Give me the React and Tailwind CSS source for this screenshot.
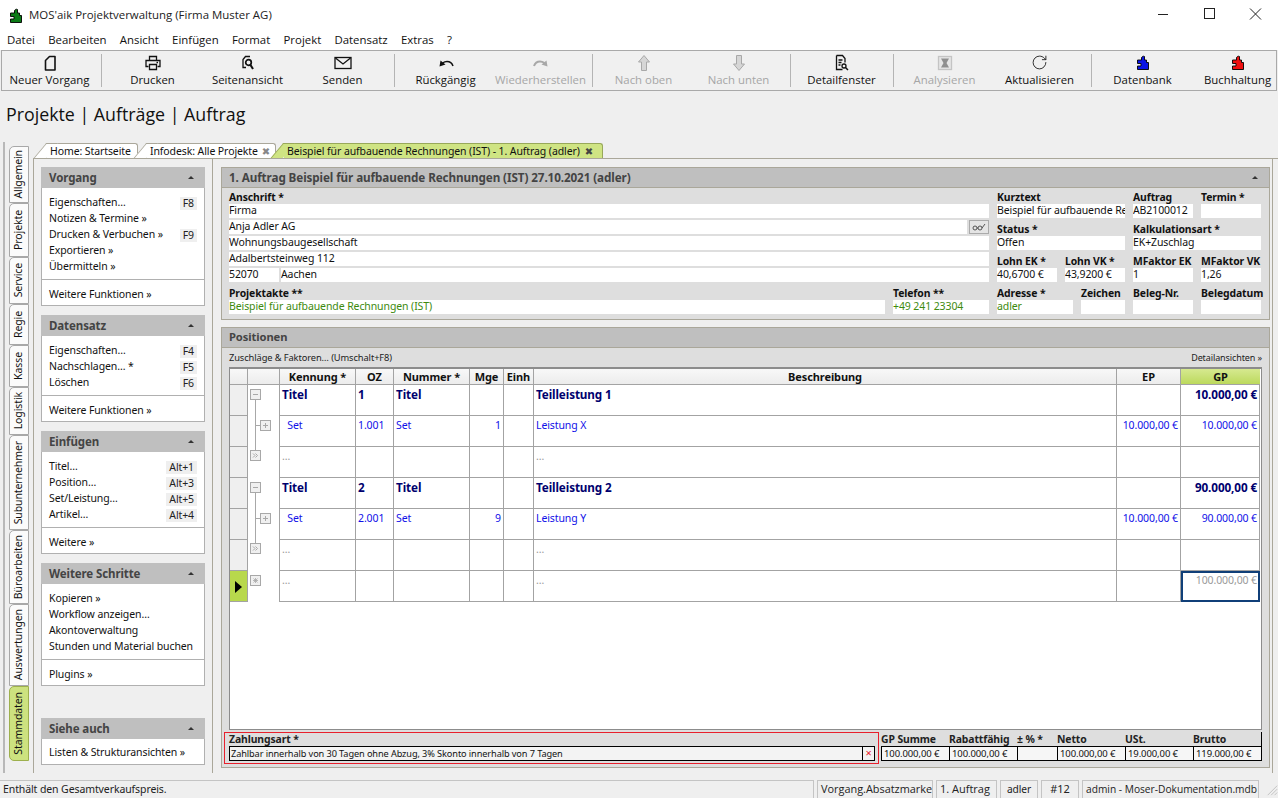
import { RotateCw } from 'lucide-react';

const tahoma = 'font-["Noto_Sans","DejaVu_Sans",sans-serif]';
const segoe = "font-['Open_Sans',sans-serif]";

// Puzzle-Figur (Logo und Datenbank / Buchhaltung)
function PuzzleIcon({ color }) {
  return (
    <svg width="12" height="15" viewBox="0 0 12 15">
      <path d="M4.5 5V3a2 2 0 0 1 3 -1.5V5h2v2.5h2v7H.5V11H4V8.500H.5V5z" fill={color} stroke="#000" strokeWidth="0.9" />
    </svg>
  );
}

function ToolIcon({ name, off }) {
  const c = off ? '#a8a8a8' : '#111';
  const common = { width: 18, height: 18, viewBox: '0 0 18 18', fill: 'none', stroke: c, strokeWidth: 1.3 };
  switch (name) {
    case 'neu':
      return <svg {...common} strokeWidth="1.6"><path d="M8.5 2.5H14V16H4.5V6.5z" strokeLinejoin="round" /></svg>;
    case 'druck':
      return <svg {...common}><path d="M5.5 6V2.5h7V6M4.5 12.5H2v-6h14v6h-2.500" /><path d="M5.5 10.5h7v5h-7z" /><path d="M12.5 8.5H14" /></svg>;
    case 'seite':
      return <svg {...common}><path d="M11 2.5H6.5L4 5.5v8h3" /><circle cx="9.5" cy="8.5" r="2.8" strokeWidth="1.7" /><path d="M11.5 11l2.5 4" strokeWidth="2" /></svg>;
    case 'mail':
      return <svg {...common}><rect x="1" y="3.5" width="16" height="11" /><path d="M1.5 4L9 10l7.500-6" /></svg>;
    case 'undo':
      return <svg {...common}><path d="M16 12c-1-3-3.500-4.500-6-4.500-1.500 0-3 .5-4.500 1.500" strokeWidth="1.5" /><path d="M2.5 12.5l1-6 5 4z" fill={c} stroke="none" /></svg>;
    case 'redo':
      return <svg {...common}><path d="M2 12c1-3 3.500-4.500 6-4.500 1.500 0 3 .5 4.500 1.500" strokeWidth="2" /><path d="M15.5 12.5l-1-6-5 4z" fill={c} stroke="none" /></svg>;
    case 'hoch':
      return <svg {...common} strokeWidth="1"><path d="M9 1.5L14.5 8h-3v8.500h-5V8h-3z" fill="#d6d6d6" /></svg>;
    case 'runter':
      return <svg {...common} strokeWidth="1"><path d="M9 16.5l5.500-6.500h-3V1.500h-5V10h-3z" fill="#d6d6d6" /></svg>;
    case 'detail':
      return <svg {...common}><path d="M3.5 1.5h6l2.500 3v4M3.5 1.5v14h6" /><path d="M5.5 6h4M5.5 8.5h3M5.5 11h2" /><circle cx="11" cy="12" r="2" /><path d="M12.5 13.5L15 16" strokeWidth="1.5" /></svg>;
    case 'analyse':
      return <svg {...common}><rect x="2.5" y="2.5" width="13" height="13" fill="#e6e6e6" stroke="#c4c4c4" /><path d="M5 4.5h8L10.500 9l2.500 4.500H5L7.500 9z" fill="#8f8f8f" stroke="none" /></svg>;
    case 'reload':
      return <RotateCw size={17} color="#222" strokeWidth={1.3} />;
    case 'db':
      return <PuzzleIcon color="#0a14e6" />;
    default:
      return <PuzzleIcon color="#f01010" />;
  }
}

const toolbar = [
  { t: 'Neuer Vorgang', i: 'neu' }, '|',
  { t: 'Drucken', i: 'druck' }, { t: 'Seitenansicht', i: 'seite' }, { t: 'Senden', i: 'mail' }, '|',
  { t: 'Rückgängig', i: 'undo' }, { t: 'Wiederherstellen', i: 'redo', off: true }, '|',
  { t: 'Nach oben', i: 'hoch', off: true }, { t: 'Nach unten', i: 'runter', off: true }, '|',
  { t: 'Detailfenster', i: 'detail' }, '|',
  { t: 'Analysieren', i: 'analyse', off: true }, { t: 'Aktualisieren', i: 'reload' }, '|',
  { t: 'Datenbank', i: 'db' }, { t: 'Buchhaltung', i: 'buch' },
];

const sideTabs = [
  ['Allgemein', 57], ['Projekte', 54], ['Service', 47], ['Regie', 41], ['Kasse', 42], ['Logistik', 48],
  ['Subunternehmer', 95], ['Büroarbeiten', 74], ['Auswertungen', 82],
];

const panels = [
  {
    title: 'Vorgang', h: 'h-[118px]',
    items: [['Eigenschaften…', 'F8'], ['Notizen & Termine »'], ['Drucken & Verbuchen »', 'F9'], ['Exportieren »'], ['Übermitteln »']],
    more: 'Weitere Funktionen »',
  },
  {
    title: 'Datensatz', h: 'h-[86px]',
    items: [['Eigenschaften…', 'F4'], ['Nachschlagen… *', 'F5'], ['Löschen', 'F6']],
    more: 'Weitere Funktionen »',
  },
  {
    title: 'Einfügen', h: 'h-[102px]',
    items: [['Titel…', 'Alt+1'], ['Position…', 'Alt+3'], ['Set/Leistung…', 'Alt+5'], ['Artikel…', 'Alt+4']],
    more: 'Weitere »',
  },
  {
    title: 'Weitere Schritte', h: 'h-[102px]',
    items: [['Kopieren »'], ['Workflow anzeigen…'], ['Akontoverwaltung'], ['Stunden und Material buchen']],
    more: 'Plugins »',
  },
];

function Caret() {
  return <span className="w-0 h-0 border-x-[3px] border-x-transparent border-b-[3px] border-b-[#333]" />;
}

function SidePanel({ title, h, items, more }) {
  return (
    <section className="w-[164px] mb-[9px]">
      <div className="h-[21px] bg-[#bfbfbf] flex items-center justify-between pl-[8px] pr-[11px]">
        <span className="font-bold text-[11.5px] text-[#444]">{title}</span>
        <Caret />
      </div>
      <div className={`${h} bg-white border-x border-b border-[#b0b0b0] flex flex-col`}>
        <div className="flex-1 pt-[7px] px-[7px]">
          {items.map(([label, key]) => (
            <div key={label} className="h-[16px] flex items-center justify-between text-[10.5px] text-[#111] whitespace-nowrap">
              <span>{label}</span>
              {key && <span className="bg-[#efefef] px-[3px] h-[13px] leading-[13px] text-[#222]">{key}</span>}
            </div>
          ))}
        </div>
        <div className="h-[26px] border-t border-[#b0b0b0] px-[7px] pt-[4px] flex items-center text-[10.5px] text-[#111]">{more}</div>
      </div>
    </section>
  );
}

function Label({ children, className = '' }) {
  return <div className={`h-[16px] pt-[2px] leading-[14px] font-bold text-[10.4px] text-[#111] whitespace-nowrap ${className}`}>{children}</div>;
}

function Field({ children, className = '', color = 'text-[#111]' }) {
  return <div className={`h-[14px] bg-white leading-[13px] text-[10.5px] overflow-hidden whitespace-nowrap ${color} ${className}`}>{children}</div>;
}

function LField({ label, value, className = '', color, fieldClass }) {
  return (
    <div className={className}>
      <Label>{label}</Label>
      <Field color={color} className={fieldClass}>{value}</Field>
    </div>
  );
}

// Baumspalte: Kästchen und Linien pro Zeile
function TreeCell({ kind }) {
  return (
    <div className="bg-white border-r border-[#a3a3a3]">
      <svg width="31" height="31" viewBox="0 0 31 31" fill="none">
        {kind === 'minus' && (
          <g stroke="#a8a8a8">
            <path d="M7.5 14v17" />
            <rect x="2.5" y="4.5" width="10" height="10" fill="#f0f0f0" />
            <path d="M5 9.5h5" />
          </g>
        )}
        {kind === 'plus' && (
          <g stroke="#a8a8a8">
            <path d="M7.5 0v31M7.5 9.5h5" />
            <rect x="12.5" y="4.5" width="10" height="10" fill="#f0f0f0" />
            <path d="M15 9.5h5M17.5 7v5" />
          </g>
        )}
        {kind === 'more' && (
          <g stroke="#a8a8a8">
            <path d="M7.5 0v3" />
            <rect x="2.5" y="3.5" width="10" height="10" fill="#f0f0f0" />
            <path d="M5 6.5l2 2-2 2M7.5 6.5l2 2-2 2" />
          </g>
        )}
        {kind === 'new' && (
          <g stroke="#a8a8a8">
            <rect x="2.5" y="4.5" width="10" height="10" fill="#f0f0f0" />
            <path d="M5 9.5h5M7.5 7v5M5.5 7.5l4 4M9.5 7.5l-4 4" strokeWidth="0.8" />
          </g>
        )}
      </svg>
    </div>
  );
}

const cell = 'border-r border-b border-[#a3a3a3] bg-white pt-[2px] px-[2px] text-[10.5px] leading-[14px] whitespace-nowrap overflow-hidden';
const bold = 'font-bold text-[#00006e] !text-[11.7px]';
const blue = 'text-[#1010e8]';
const dots = 'text-[#9a9a9a]';

function Row({ tree, marker, values, style, selected }) {
  const [kennung, oz, nummer, mge, text, ep, gp] = values;
  return (
    <>
      <div className={`border-r border-b border-[#a3a3a3] flex items-center justify-center ${marker ? 'bg-[#b8d84c]' : 'bg-[#efefef]'}`}>
        {marker && <span className="w-0 h-0 mt-[1px] border-y-[6px] border-y-transparent border-l-[7px] border-l-black" />}
      </div>
      <TreeCell kind={tree} />
      <div className={`${cell} ${style}`}>{kennung}</div>
      <div className={`${cell} ${style}`}>{oz}</div>
      <div className={`${cell} ${style}`}>{nummer}</div>
      <div className={`${cell} ${style} text-right`}>{mge}</div>
      <div className={`${cell} ${style}`} />
      <div className={`${cell} ${style}`}>{text}</div>
      <div className={`${cell} ${style} text-right`}>{ep}</div>
      {selected ? (
        <div className="border-2 border-[#103f78] bg-white text-right text-[10.5px] leading-[14px] text-[#9a9a9a] pr-[1px] whitespace-nowrap overflow-hidden">{gp}</div>
      ) : (
        <div className={`${cell} ${style} text-right`}>{gp}</div>
      )}
    </>
  );
}

const headCell = 'border-r border-b border-[#a3a3a3] bg-gradient-to-b from-[#f8f8f8] to-[#ececec] text-center font-bold text-[11px] leading-[15px] text-[#111] whitespace-nowrap';

function BottomField({ label, value, className = '' }) {
  return (
    <div className={className}>
      <div className="h-[14px] leading-[14px] font-bold text-[10.4px] text-[#222] whitespace-nowrap">{label}</div>
      <div className="h-[15px] border-y border-l border-black bg-[#f6f6f6] leading-[13px] text-[9.5px] pl-[2px] whitespace-nowrap overflow-hidden">{value}</div>
    </div>
  );
}

function StatusCell({ children, className = '' }) {
  return <div className={`h-[18px] border-t border-x border-[#c4c4c4] px-[3px] leading-[16px] text-[#222] whitespace-nowrap overflow-hidden shrink-0 ${className}`}>{children}</div>;
}

// Reiter mit schräger linker Kante
function Tab({ children, className = '', slant }) {
  return (
    <div className={`relative h-[15px] pl-[3px] border-t border-r rounded-tr-[3px] text-[10.5px] leading-[14px] flex items-center whitespace-nowrap before:absolute before:top-[-1px] before:bottom-0 before:left-[-7px] before:w-[12px] before:skew-x-[-40deg] before:border-l before:border-t ${slant} ${className}`}>
      <span className="relative">{children}</span>
    </div>
  );
}

export default function App() {
  return (
    <div className={`w-[1278px] h-[798px] overflow-hidden bg-[#efefef] flex flex-col text-[#111] tracking-[-0.1px] ${tahoma}`}>
      {/* Titelleiste */}
      <header className={`h-[30px] bg-white flex items-center pl-[10px] shrink-0 tracking-normal ${segoe}`}>
        <PuzzleIcon color="#0b7a16" />
        <span className="ml-[7px] text-[11.45px] text-[#222]">MOS'aik Projektverwaltung (Firma Muster AG)</span>
        <div className="ml-auto flex items-center -mt-[2px]">
          <svg width="46" height="30" viewBox="0 0 46 30" stroke="#222" fill="none"><path d="M18 15.5h10" /></svg>
          <svg width="46" height="30" viewBox="0 0 46 30" stroke="#222" fill="none"><rect x="18.5" y="9.5" width="10" height="10" /></svg>
          <svg width="46" height="30" viewBox="0 0 46 30" stroke="#222" fill="none"><path d="M18 9.5l11 11M29 9.5l-11 11" /></svg>
        </div>
      </header>

      {/* Menü */}
      <nav className={`h-[20px] bg-white flex items-center pl-[7px] gap-[13.25px] text-[11.4px] text-[#111] tracking-normal shrink-0 ${segoe}`}>
        {['Datei', 'Bearbeiten', 'Ansicht', 'Einfügen', 'Format', 'Projekt', 'Datensatz', 'Extras', '?'].map((m) => (
          <span key={m}>{m}</span>
        ))}
      </nav>

      {/* Werkzeugleiste */}
      <div className={`h-[41px] mx-[1px] bg-[#f0f0f0] border border-[#a9a9a9] flex items-stretch shrink-0 overflow-hidden tracking-normal ${segoe}`}>
        {toolbar.map((b, idx) =>
          b === '|' ? (
            <div key={idx} className="w-[8px] shrink-0 flex justify-center py-[3px]"><div className="w-px bg-[#b4b4b4]" /></div>
          ) : (
            <div key={b.t} className="w-[95px] shrink-0 flex flex-col items-center pt-[2px]">
              <div className="h-[19px] flex items-center"><ToolIcon name={b.i} off={b.off} /></div>
              <span className={`text-[11.4px] leading-[16px] whitespace-nowrap ${b.off ? 'text-[#a6a6a6]' : 'text-[#111]'}`}>{b.t}</span>
            </div>
          ),
        )}
      </div>

      {/* Seitentitel */}
      <div className={`h-[51px] pl-[6px] flex items-center text-[17.8px] text-[#111] tracking-normal shrink-0 pb-[5px] ${segoe}`}>
        Projekte | Aufträge | Auftrag
      </div>

      {/* Hauptbereich */}
      <div className="h-[638px] shrink-0 flex">
        {/* vertikale Reiter */}
        <aside className="w-[33px] shrink-0 pl-[3px] pb-[7px]">
          <div className="h-full border-l-2 border-[#b8b8b8] pl-[4px] pt-[4px]">
            {sideTabs.map(([label, h]) => (
              <div key={label} style={{ height: h }} className="w-[20px] bg-[#fbfbfb] border border-[#a8a8a8] rounded-tl-[5px] flex items-center justify-center">
                <span className="[writing-mode:vertical-rl] rotate-180 text-[10.5px] text-[#111] whitespace-nowrap">{label}</span>
              </div>
            ))}
            <div className="h-[75px] w-[20px] bg-[#cde27f] border border-[#9db04d] rounded-l-[5px] flex items-center justify-center">
              <span className="[writing-mode:vertical-rl] rotate-180 text-[10.5px] text-[#111] whitespace-nowrap">Stammdaten</span>
            </div>
          </div>
        </aside>

        <div className="flex-1 min-w-0 flex flex-col">
          {/* Reiter oben */}
          <div className="h-[17px] flex items-end pl-[14px] border-b border-[#aaa79a] shrink-0 pr-[5px]">
            <Tab className="w-[91px] bg-white border-[#aaa79a]" slant="before:bg-white before:border-[#aaa79a]">Home: Startseite</Tab>
            <Tab className="w-[129px] ml-[9px] bg-white border-[#aaa79a]" slant="before:bg-white before:border-[#aaa79a]">
              <span className="inline-flex items-center gap-[4px]">Infodesk: Alle Projekte <span className="text-[#888] text-[10px]">✖</span></span>
            </Tab>
            <Tab className="w-[319px] ml-[8px] bg-[#cfe483] border-[#98a85a]" slant="before:bg-[#cfe483] before:border-[#98a85a]">
              <span className="inline-flex items-center gap-[5px]">Beispiel für aufbauende Rechnungen (IST) - 1. Auftrag (adler) <span className="text-[#444] text-[10px]">✖</span></span>
            </Tab>
          </div>

          <div className="flex-1 min-h-0 flex mb-[7px] mr-[5px] border-r border-[#aaa79a]">
            {/* linke Spalte */}
            <aside className="w-[180px] shrink-0 border-l border-r border-[#aaa79a] pl-[7px] pt-[8px]">
              {panels.map((p) => <SidePanel key={p.title} {...p} />)}
              <div className="h-[23px]" />
              <section className="w-[164px]">
                <div className="h-[21px] bg-[#bfbfbf] flex items-center justify-between pl-[8px] pr-[11px]">
                  <span className="font-bold text-[11.5px] text-[#444]">Siehe auch</span>
                  <Caret />
                </div>
                <div className="h-[26px] bg-white border-x border-b border-[#b0b0b0] px-[7px] pt-[3px] flex items-center text-[10.5px] text-[#111]">Listen &amp; Strukturansichten »</div>
              </section>
            </aside>

            {/* rechte Spalte */}
            <main className="flex-1 min-w-0 pl-[8px] pr-[2px] pt-[8px]">
              {/* Kopf */}
              <section className="h-[153px] border border-[#aaa79a] bg-[#dedede]">
                <div className="h-[20px] bg-[#bfbfbf] border-b border-[#aaa79a] flex items-center justify-between pl-[7px] pr-[11px]">
                  <span className="font-bold text-[11.7px] text-[#444]">1. Auftrag Beispiel für aufbauende Rechnungen (IST) 27.10.2021 (adler)</span>
                  <Caret />
                </div>
                <div className="pl-[7px] pr-[7px] flex gap-[8px]">
                  <div className="w-[760px]">
                    <Label>Anschrift *</Label>
                    <Field className="mb-[2px]">Firma</Field>
                    <div className="flex gap-[2px] mb-[2px]">
                      <Field className="flex-1">Anja Adler AG</Field>
                      <div className="w-[20px] h-[14px] bg-[#e4e4e4] border border-[#aaa] flex items-center justify-center">
                        <svg width="14" height="8" viewBox="0 0 14 8" fill="none" stroke="#444" strokeWidth="0.9"><circle cx="3" cy="5" r="2" /><circle cx="8" cy="5" r="2" /><path d="M5 5h1M10 5l3-4" /></svg>
                      </div>
                    </div>
                    <Field className="mb-[2px]">Wohnungsbaugesellschaft</Field>
                    <Field className="mb-[2px]">Adalbertsteinweg 112</Field>
                    <div className="flex gap-[2px] mb-[2px]">
                      <Field className="w-[50px]">52070</Field>
                      <Field className="flex-1">Aachen</Field>
                    </div>
                    <div className="flex gap-[8px]">
                      <LField label="Projektakte **" value="Beispiel für aufbauende Rechnungen (IST)" className="flex-1" color="text-[#3d8a0e]" fieldClass="bg-[#f0f0f0]" />
                      <LField label="Telefon **" value="+49 241 23304" className="w-[96px]" color="text-[#3d8a0e]" fieldClass="bg-[#f0f0f0]" />
                    </div>
                  </div>
                  <div className="w-[264px] grid grid-cols-[60px_60px_60px_60px] gap-x-[8px] auto-rows-[32px]">
                    <LField label="Kurztext" value="Beispiel für aufbauende Re" className="col-span-2" />
                    <LField label="Auftrag" value="AB2100012" />
                    <LField label="Termin *" value="" />
                    <LField label="Status *" value="Offen" className="col-span-2" />
                    <LField label="Kalkulationsart *" value="EK+Zuschlag" className="col-span-2" />
                    <LField label="Lohn EK *" value="40,6700 €" />
                    <LField label="Lohn VK *" value="43,9200 €" />
                    <LField label="MFaktor EK" value="1" />
                    <LField label="MFaktor VK" value="1,26" />
                    <div className="col-span-2 flex gap-[8px]">
                      <LField label="Adresse *" value="adler" className="w-[76px]" color="text-[#3d8a0e]" />
                      <LField label="Zeichen" value="" className="w-[44px]" />
                    </div>
                    <LField label="Beleg-Nr." value="" />
                    <LField label="Belegdatum" value="" />
                  </div>
                </div>
              </section>

              {/* Positionen */}
              <section className="mt-[7px] h-[441px] border border-[#aaa79a] bg-[#dedede] flex flex-col">
                <div className="h-[20px] bg-[#bfbfbf] border-b border-[#aaa79a] flex items-center pl-[7px] font-bold text-[11.2px] text-[#444]">Positionen</div>
                <div className="h-[19px] flex items-center justify-between pl-[7px] pr-[7px] text-[#222]">
                  <span className="text-[9.3px]">Zuschläge &amp; Faktoren… (Umschalt+F8)</span>
                  <span className="text-[9px]">Detailansichten »</span>
                </div>
                <div className="mx-[7px] h-[363px] bg-white border border-t-2 border-[#8c8c8c] overflow-hidden">
                  <div className="grid grid-cols-[18px_32px_76px_38px_76px_34px_30px_583px_64px_79px] grid-rows-[16px_31px_31px_31px_31px_31px_31px_31px]">
                    <div className={headCell} />
                    <div className={headCell} />
                    <div className={headCell}>Kennung *</div>
                    <div className={headCell}>OZ</div>
                    <div className={headCell}>Nummer *</div>
                    <div className={headCell}>Mge</div>
                    <div className={headCell}>Einh</div>
                    <div className={headCell}>Beschreibung</div>
                    <div className={headCell}>EP</div>
                    <div className="border-b border-[#a3a3a3] bg-gradient-to-b from-[#d6e98f] to-[#bcd95c] text-center font-bold text-[11px] leading-[15px]">GP</div>

                    <Row tree="minus" style={bold} values={['Titel', '1', 'Titel', '', 'Teilleistung 1', '', '10.000,00 €']} />
                    <Row tree="plus" style={blue} values={['\u00a0\u00a0Set', '1.001', 'Set', '1', 'Leistung X', '10.000,00 €', '10.000,00 €']} />
                    <Row tree="more" style={dots} values={['…', '', '', '', '…', '', '']} />
                    <Row tree="minus" style={bold} values={['Titel', '2', 'Titel', '', 'Teilleistung 2', '', '90.000,00 €']} />
                    <Row tree="plus" style={blue} values={['\u00a0\u00a0Set', '2.001', 'Set', '9', 'Leistung Y', '10.000,00 €', '90.000,00 €']} />
                    <Row tree="more" style={dots} values={['…', '', '', '', '…', '', '']} />
                    <Row tree="new" marker selected style={dots} values={['…', '', '', '', '…', '', '100.000,00 €']} />
                  </div>
                </div>
                <div className="flex pl-[2px] pt-[2px]">
                  <div className="w-[655px] h-[32px] border border-[#e8202c] pl-[4px] pr-[3px] flex flex-col">
                    <div className="h-[13px] leading-[13px] font-bold text-[10.4px] text-[#222]">Zahlungsart *</div>
                    <div className="h-[15px] border border-black bg-[#f3f3f3] flex items-center pl-[1px] text-[9.2px] leading-[11px]">
                      <span className="flex-1">Zahlbar innerhalb von 30 Tagen ohne Abzug, 3% Skonto innerhalb von 7 Tagen</span>
                      <span className="w-[12px] h-full border-l border-black text-center text-[#e8202c] text-[11px] leading-[12px]">×</span>
                    </div>
                  </div>
                  <div className="flex ml-[2px] border-r border-black self-start">
                    <BottomField label="GP Summe" value="100.000,00 €" className="w-[68px]" />
                    <BottomField label="Rabattfähig" value="100.000,00 €" className="w-[68px]" />
                    <BottomField label="± % *" value="" className="w-[40px]" />
                    <BottomField label="Netto" value="100.000,00 €" className="w-[68px]" />
                    <BottomField label="USt." value="19.000,00 €" className="w-[68px]" />
                    <BottomField label="Brutto" value="119.000,00 €" className="w-[68px]" />
                  </div>
                </div>
              </section>
            </main>
          </div>
        </div>
      </div>

      {/* Statusleiste */}
      <footer className="h-[18px] shrink-0 flex gap-[3px] items-start">
        <StatusCell className="w-[814px] border-l-0 text-[10.5px]">Enthält den Gesamtverkaufspreis.</StatusCell>
        <StatusCell className="w-[116px] text-[10.9px] tracking-normal font-['Open_Sans',sans-serif]">Vorgang.Absatzmarke</StatusCell>
        <StatusCell className="w-[61px] text-[11px] tracking-normal font-['Open_Sans',sans-serif]">1. Auftrag</StatusCell>
        <StatusCell className="w-[38px] text-[10.2px] text-center">adler</StatusCell>
        <StatusCell className="w-[38px] text-[11px] text-center">#12</StatusCell>
        <StatusCell className="w-[177px] text-[10.2px] tracking-normal font-['Open_Sans',sans-serif]">admin - Moser-Dokumentation.mdb</StatusCell>
        <svg className="ml-[4px] mt-[3px]" width="14" height="14" viewBox="0 0 14 14" stroke="#bbb"><path d="M13 2L2 13M13 6l-7 7M13 10l-3 3" /></svg>
      </footer>
    </div>
  );
}
